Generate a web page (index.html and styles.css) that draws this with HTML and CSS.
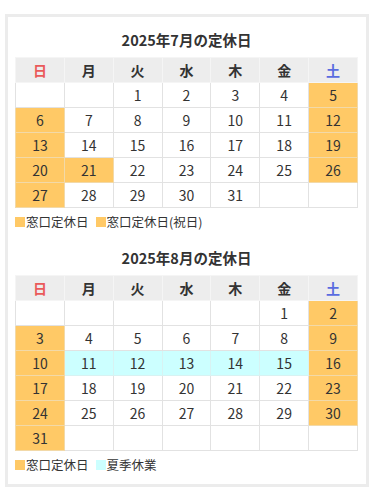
FILE: index.html
```html
<!DOCTYPE html>
<html lang="ja">
<head>
<meta charset="utf-8">
<link rel="stylesheet" href="styles.css">
</head>
<body>
<div class="box">
  <section class="month">
    <h2 class="title">2025年7月の定休日</h2>
    <table class="cal">
      <thead>
        <tr><th class="sun">日</th><th>月</th><th>火</th><th>水</th><th>木</th><th>金</th><th class="sat">土</th></tr>
      </thead>
      <tbody>
        <tr><td></td><td></td><td>1</td><td>2</td><td>3</td><td>4</td><td class="off">5</td></tr>
        <tr><td class="off">6</td><td>7</td><td>8</td><td>9</td><td>10</td><td>11</td><td class="off">12</td></tr>
        <tr><td class="off">13</td><td>14</td><td>15</td><td>16</td><td>17</td><td>18</td><td class="off">19</td></tr>
        <tr><td class="off">20</td><td class="off">21</td><td>22</td><td>23</td><td>24</td><td>25</td><td class="off">26</td></tr>
        <tr><td class="off">27</td><td>28</td><td>29</td><td>30</td><td>31</td><td></td><td></td></tr>
      </tbody>
    </table>
    <div class="legend">
      <span class="item"><span class="sw sw-off"></span>窓口定休日</span>
      <span class="item"><span class="sw sw-off"></span>窓口定休日(祝日)</span>
    </div>
  </section>
  <section class="month month-2">
    <h2 class="title">2025年8月の定休日</h2>
    <table class="cal">
      <thead>
        <tr><th class="sun">日</th><th>月</th><th>火</th><th>水</th><th>木</th><th>金</th><th class="sat">土</th></tr>
      </thead>
      <tbody>
        <tr><td></td><td></td><td></td><td></td><td></td><td>1</td><td class="off">2</td></tr>
        <tr><td class="off">3</td><td>4</td><td>5</td><td>6</td><td>7</td><td>8</td><td class="off">9</td></tr>
        <tr><td class="off">10</td><td class="summer">11</td><td class="summer">12</td><td class="summer">13</td><td class="summer">14</td><td class="summer">15</td><td class="off">16</td></tr>
        <tr><td class="off">17</td><td>18</td><td>19</td><td>20</td><td>21</td><td>22</td><td class="off">23</td></tr>
        <tr><td class="off">24</td><td>25</td><td>26</td><td>27</td><td>28</td><td>29</td><td class="off">30</td></tr>
        <tr><td class="off">31</td><td></td><td></td><td></td><td></td><td></td><td></td></tr>
      </tbody>
    </table>
    <div class="legend">
      <span class="item"><span class="sw sw-off"></span>窓口定休日</span>
      <span class="item"><span class="sw sw-summer"></span>夏季休業</span>
    </div>
  </section>
</div>
</body>
</html>
```
FILE: styles.css
```css
html, body {
  margin: 0;
  padding: 0;
  background: #fff;
}
body {
  font-family: "Noto Sans CJK JP", "Noto Sans", sans-serif;
  color: #333;
}
.box {
  margin: 14px 0 0 5px;
  box-sizing: border-box;
  border: 3px solid #ececec;
  padding: 0 8px 10px 7px;
  width: 364px;
}
.title {
  margin: 0;
  padding: 13px 0 7px;
  font-size: 14.5px;
  line-height: 20px;
  font-weight: bold;
  text-align: center;
  color: #333;
}
.month-2 {
  margin-top: 4px;
}
.cal {
  width: 343px;
  border-collapse: collapse;
  table-layout: fixed;
}
.cal th, .cal td {
  border: 1px solid #e2e2e2;
  text-align: center;
  padding: 0;
  height: 24px;
  font-size: 14px;
  line-height: 18px;
}
.cal th {
  background: #ededed;
  border-color: #f5f5f5;
  font-weight: bold;
  color: #333;
}
.cal th.sun { color: #ea5a5a; }
.cal th.sat { color: #5a6ce0; }
.cal td.off {
  background: #ffc966;
  border-color: #f2d9a8;
}
.cal td.summer {
  background: #ccffff;
  border-color: #d8f2f2;
}
.legend {
  margin-top: 5px;
  font-size: 12.5px;
  line-height: 18px;
  color: #333;
  display: flex;
  gap: 7px;
}
.item {
  display: inline-flex;
  align-items: center;
}
.sw {
  display: inline-block;
  width: 10px;
  height: 10px;
  margin-right: 1px;
}
.sw-off { background: #ffc966; }
.sw-summer { background: #ccffff; }
```
